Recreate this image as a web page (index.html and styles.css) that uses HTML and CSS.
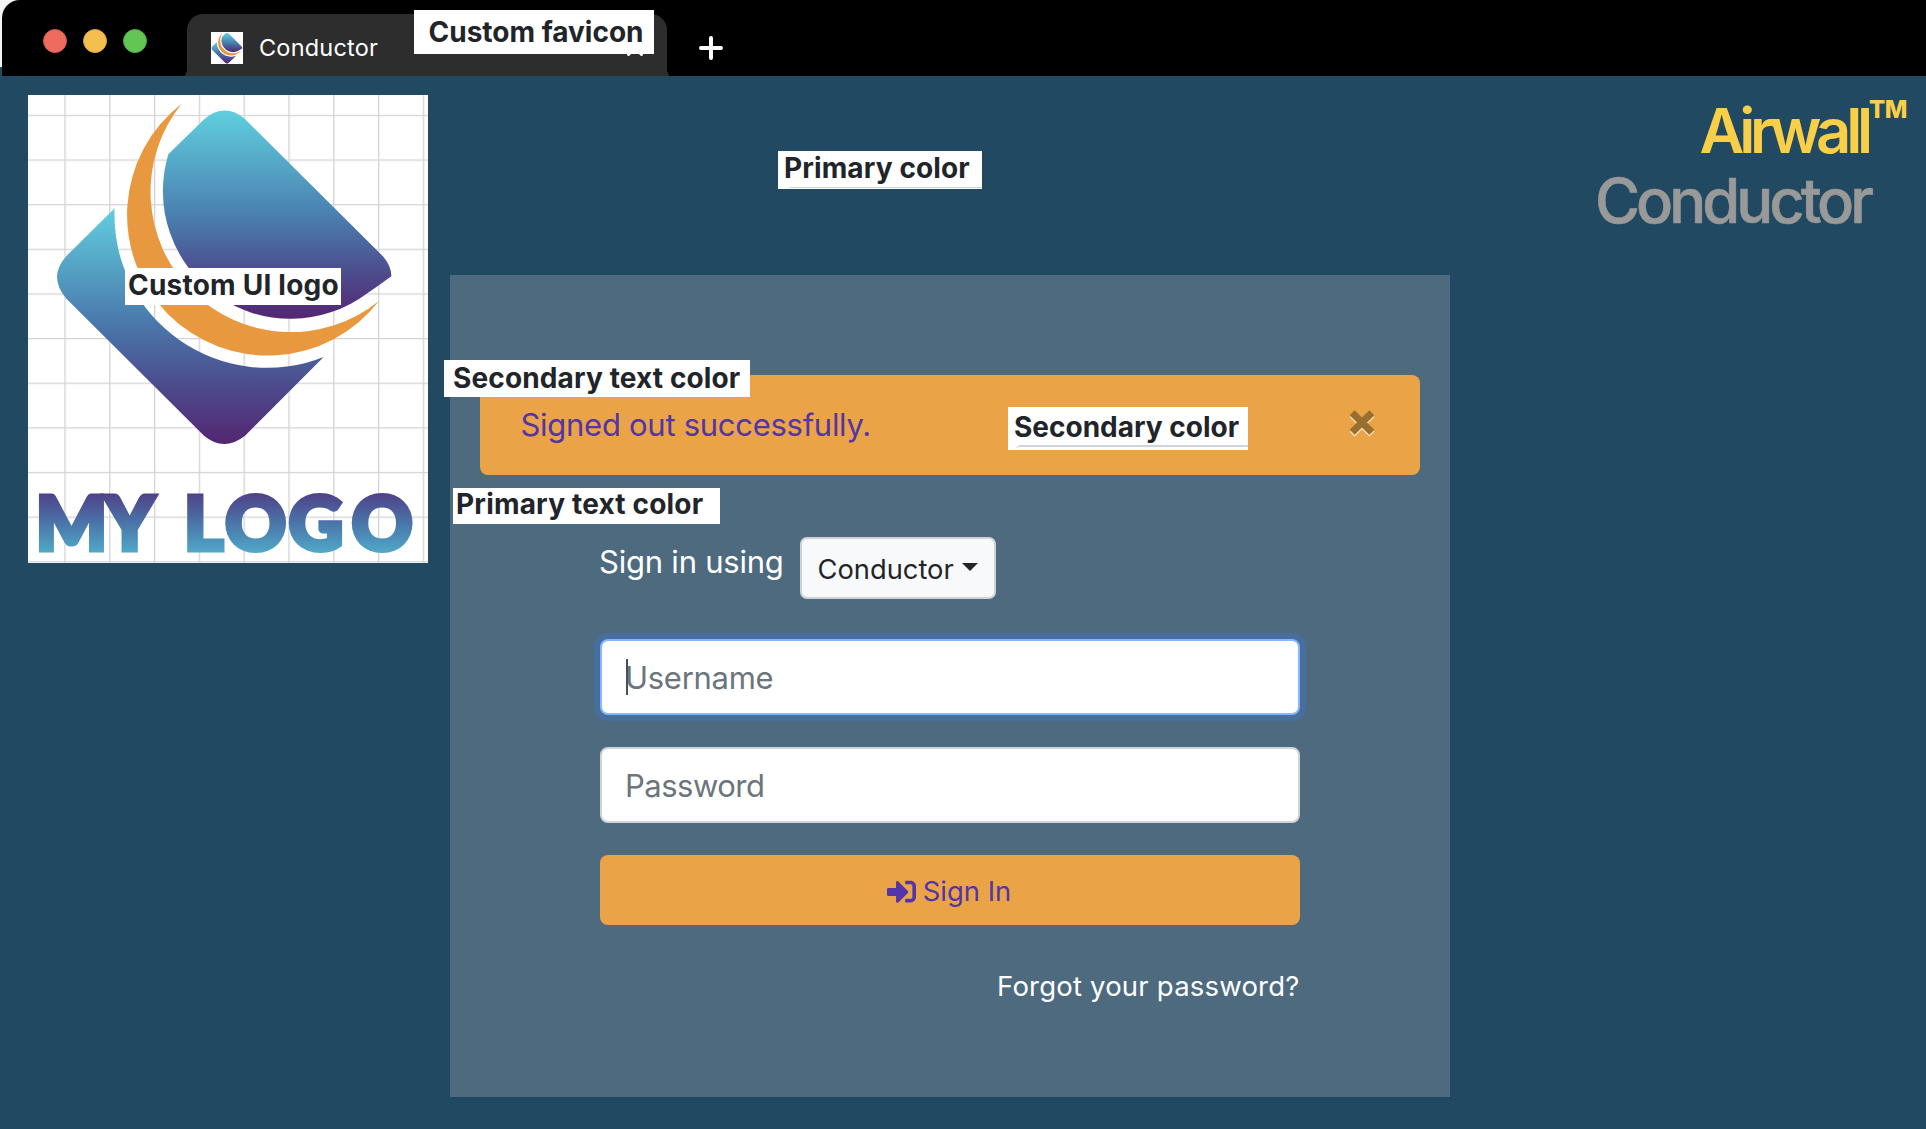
FILE: index.html
```html
<!DOCTYPE html>
<html lang="en">
<head>
<meta charset="utf-8">
<title>Conductor</title>
<link rel="stylesheet" href="styles.css">
</head>
<body>
<svg class="defs" width="0" height="0" aria-hidden="true">
  <defs>
    <linearGradient id="upper" gradientUnits="userSpaceOnUse" x1="0" y1="77" x2="0" y2="702">
      <stop offset="0" stop-color="#60cfdf"/><stop offset=".5" stop-color="#4a80b0"/><stop offset=".75" stop-color="#4c5190"/><stop offset="1" stop-color="#542672"/>
    </linearGradient>
    <linearGradient id="lower" gradientUnits="userSpaceOnUse" x1="0" y1="370" x2="0" y2="1077">
      <stop offset="0" stop-color="#60cfdf"/><stop offset=".5" stop-color="#4a76aa"/><stop offset=".75" stop-color="#4c4b8c"/><stop offset="1" stop-color="#542672"/>
    </linearGradient>
    <linearGradient id="word" gradientUnits="userSpaceOnUse" x1="0" y1="1228" x2="0" y2="1404">
      <stop offset="0" stop-color="#4f4389"/><stop offset=".5" stop-color="#4a76aa"/><stop offset="1" stop-color="#51a9c9"/>
    </linearGradient>
    <pattern id="grid" patternUnits="userSpaceOnUse" x="133" y="89.5" width="134.4" height="133.9">
      <path d="M2 0V134M0 2H135" stroke="#000" stroke-opacity=".17" stroke-width="4" fill="none"/>
    </pattern>
    <g id="mark">
      <path fill="url(#upper)" d="M445 208 550 105Q612 50 675 102L1090 515Q1115 545 1114 574Q1062 612 1040 626A383 383 0 0 1 445 208Z"/>
      <path fill="#e8983f" d="M485 56A422 422 0 1 0 1077 648A421 421 0 0 1 485 56Z"/>
      <path fill="url(#lower)" d="M284 370 140 512Q82 575 140 642L552 1052Q612 1102 675 1052L911 816A458 458 0 0 1 284 370Z"/>
    </g>
  </defs>
</svg>

<header class="browser">
  <div class="browser-bar">
    <div class="lights"><i class="light red"></i><i class="light amber"></i><i class="light green"></i></div>
    <div class="tab">
      <svg class="favicon" viewBox="90 44 1045 1045"><rect x="90" y="44" width="1045" height="1045" fill="#fff"/><use href="#mark"/></svg>
      <span class="tab-title">Conductor</span>
      <svg class="tab-close" viewBox="0 0 16 16"><path d="M1.5 1.5l13 13m0-13l-13 13"/></svg>
    </div>
    <svg class="new-tab" viewBox="0 0 24 24"><path d="M12 2v20M2 12h20"/></svg>
  </div>
</header>

<main class="page">
  <svg class="logo" viewBox="24 30 1200 1404">
    <rect x="24" y="30" width="1200" height="1404" fill="#fff"/>
    <rect x="24" y="30" width="1200" height="1404" fill="url(#grid)"/>
    <use href="#mark"/>
    <text class="logo-word" y="1396" x="47 255 492 616 806 995" fill="url(#word)" stroke="url(#word)">MYLOGO</text>
  </svg>

  <section class="panel">
    <div class="alert">
      <span class="alert-text">Signed out successfully.</span>
      <svg class="alert-close" viewBox="0 0 26 28"><path class="shine" d="M3.200 5.700l19.600 19.600m0-19.600l-19.600 19.600"/><path class="cross" d="M3.200 3.700l19.600 19.600m0-19.600l-19.600 19.600"/></svg>
    </div>
    <form class="form">
      <div class="method">
        <span class="method-label">Sign in using</span>
        <button type="button" class="select"><span class="select-text">Conductor</span><i class="caret"></i></button>
      </div>
      <div class="field focused"><span class="ph user">Username</span><i class="cursor"></i></div>
      <div class="field"><span class="ph pass">Password</span></div>
      <button type="button" class="submit">
        <svg class="submit-icon" viewBox="0 0 512 512"><path d="M416 448h-84c-6.600 0-12-5.400-12-12v-40c0-6.600 5.400-12 12-12h84c17.700 0 32-14.300 32-32V160c0-17.700-14.300-32-32-32h-84c-6.600 0-12-5.400-12-12V76c0-6.600 5.400-12 12-12h84c53 0 96 43 96 96v192c0 53-43 96-96 96zm-47-201L201 79c-15-15-41-4.500-41 17v96H24c-13.300 0-24 10.700-24 24v96c0 13.300 10.700 24 24 24h136v96c0 21.500 26 32 41 17l168-168c9.300-9.400 9.300-24.600 0-34z"/></svg>
        <span>Sign In</span>
      </button>
      <a class="forgot">Forgot your password?</a>
    </form>
  </section>

  <div class="brand">
    <div class="brand-top">Airwall<span class="tm">TM</span></div>
    <div class="brand-sub">Conductor</div>
  </div>
</main>

<div class="note note-favicon">Custom favicon</div>
<div class="note note-primary">Primary color</div>
<div class="note note-logo">Custom UI logo</div>
<div class="note note-sec-text">Secondary text color</div>
<div class="note note-pri-text">Primary text color</div>
<div class="note note-secondary">Secondary color</div>
</body>
</html>
```
FILE: styles.css
```css
* { box-sizing: border-box; }
body {
  margin: 0;
  width: 1926px;
  height: 1129px;
  position: relative;
  overflow: hidden;
  background: #224962;
  font-family: Inter, "Liberation Sans", sans-serif;
  color: #212529;
}
.defs { position: absolute; }

/* browser chrome */
.browser {
  height: 76px;
  padding-left: 2px;
  background: linear-gradient(#f4f4f4 0 67px, #224962 67px);
}
.browser-bar {
  height: 76px;
  background: #000;
  border-top-left-radius: 18px;
  display: flex;
  overflow: hidden;
}
.lights { display: flex; gap: 16px; width: 185px; padding: 29px 0 0 41px; }
.light { width: 24px; height: 24px; border-radius: 50%; border: 1px solid; }
.red { background: #ed6b5f; border-color: #d2564b; }
.amber { background: #f5bf4f; border-color: #d8a03c; }
.green { background: #62c655; border-color: #51a73f; }
.tab {
  position: relative;
  width: 480px;
  height: 62px;
  margin-top: 14px;
  padding: 0 24px;
  background: #2d2d2d;
  border-radius: 16px 16px 0 0;
  display: flex;
}
.tab::before, .tab::after {
  content: "";
  position: absolute;
  top: 53px;
  width: 16px;
  height: 16px;
}
.tab::before { left: -16px; background: radial-gradient(circle at 0 0, transparent 16px, #2d2d2d 16.5px); }
.tab::after { right: -16px; background: radial-gradient(circle at 100% 0, transparent 16px, #2d2d2d 16.5px); }
.favicon { width: 32px; height: 32px; margin: 18px 16px 0 0; }
.tab-title { font-size: 23.5px; line-height: 30px; letter-spacing: .2px; margin-top: 19px; color: #fff; align-self: flex-start; }
.tab-close { width: 16px; height: 16px; margin: 26px 0 0 auto; stroke: #fff; stroke-width: 3; stroke-linecap: round; }
.new-tab { width: 24px; height: 24px; margin: 36px 0 0 32px; stroke: #fff; stroke-width: 4; stroke-linecap: round; }

/* page */
.page { display: grid; grid-template-columns: 450px 1000px 476px; height: 1053px; align-items: start; }
.logo { width: 400px; height: 468px; margin: 19px 0 0 28px; overflow: visible; }
.logo-word { font: 900 225px Lato, sans-serif; stroke-width: 15; }

.panel { margin-top: 199px; height: 822px; padding: 100px 30px 0; background: #4e6a7f; }
.alert {
  height: 100px;
  padding: 0 45px 0 40.5px;
  background: #eba347;
  border-radius: 8px;
  display: flex;
  justify-content: space-between;
}
.alert-text { font-size: 31px; line-height: 100px; letter-spacing: -.28px; color: #5335a8; }
.alert-close { width: 26px; height: 28px; margin-top: 34px; fill: none; stroke-width: 7; }
.shine { stroke: #f8dcb8; }
.cross { stroke: #986f2d; }

.form { width: 700px; margin: 62px auto 0; display: flex; flex-direction: column; gap: 32px; }
.method { display: flex; justify-content: space-between; height: 62px; margin: 0 0 8px -1px; padding-right: 304px; align-items: flex-start; }
.method-label { font-size: 31px; line-height: 49px; letter-spacing: -.22px; color: #fff; }
.select {
  width: 196px;
  height: 62px;
  padding: 0 16px 0 15.5px;
  border: 2px solid #cfd2d6;
  border-radius: 7px;
  background: #f8f9fa;
  color: #212529;
  font: 27.3px/60px Inter, sans-serif;
  display: flex;
  justify-content: space-between;
}
.select-text { position: relative; top: 1px; }
.caret { border: 8px solid transparent; border-top-color: #212529; border-bottom: 0; margin-top: 24px; }
.field { position: relative; height: 76px; padding: 0 23px; background: #fff; border: 2px solid #ced4da; border-radius: 8px; }
.focused { border-color: #86b7fe; box-shadow: 0 0 0 6px #466f9d; }
.ph { font-size: 31px; line-height: 74px; color: #6c757d; }
.user { letter-spacing: -.28px; }
.pass { letter-spacing: -.5px; }
.cursor { position: absolute; left: 24px; top: 18px; width: 2px; height: 36px; background: #495057; }
.submit {
  height: 70px;
  padding-right: 8px;
  border: 0;
  border-radius: 8px;
  background: #eba347;
  color: #5335a8;
  font: 27.4px/71px Inter, sans-serif;
  display: flex;
  justify-content: center;
  gap: 7px;
}
.submit-icon { width: 29px; height: 29px; margin-top: 21px; fill: currentColor; }
.forgot { margin-top: 9px; padding-right: .5px; text-align: right; color: #fff; font-size: 27.5px; line-height: 41px; letter-spacing: .2px; }

/* product wordmark, right-aligned with the trademark hanging outside */
.brand { padding: 41px 56px 0 0; text-align: right; white-space: nowrap; }
.brand-top { position: relative; color: #f9cf48; font-size: 61.5px; font-weight: 600; line-height: 28px; letter-spacing: -5.2px; padding-right: 2px; }
.brand-sub { margin-top: 21px; color: #999; font-size: 61.5px; font-weight: 500; line-height: 70px; letter-spacing: -4px; -webkit-text-stroke: .6px #999; }
.tm { position: absolute; left: 419px; top: -21px; font-size: 24px; font-weight: 800; letter-spacing: -.5px; }

/* annotation labels over the page */
.note { position: absolute; background: #fff; font-size: 28px; font-weight: 700; white-space: nowrap; }
.note-favicon { left: 414px; top: 10px; width: 240px; height: 44px; line-height: 44px; padding-left: 14.5px; }
.note-primary { left: 778px; top: 151px; width: 204px; height: 38px; line-height: 35px; letter-spacing: .12px; padding-left: 6px; }
.note-logo { left: 125px; top: 268px; width: 216px; height: 37px; line-height: 35px; letter-spacing: .22px; padding-left: 3px; }
.note-sec-text { left: 444px; top: 360px; width: 306px; height: 37px; line-height: 36px; letter-spacing: .13px; padding-left: 9px; }
.note-pri-text { left: 453px; top: 488px; width: 267px; height: 36px; line-height: 32px; letter-spacing: .19px; padding-left: 3px; }
.note-secondary { left: 1008px; top: 407px; width: 240px; height: 43px; line-height: 40px; padding-left: 6px; overflow: hidden; }
.note-secondary::after, .note-primary::after {
  content: "";
  position: absolute;
  left: 8px;
  right: 0;
  bottom: 0;
  height: 3px;
  border-top: 2px solid #ced4da;
  border-top-left-radius: 6px 3px;
}
.note-primary::after { height: 1px; left: 10px; border-top-width: 1px; }
```
